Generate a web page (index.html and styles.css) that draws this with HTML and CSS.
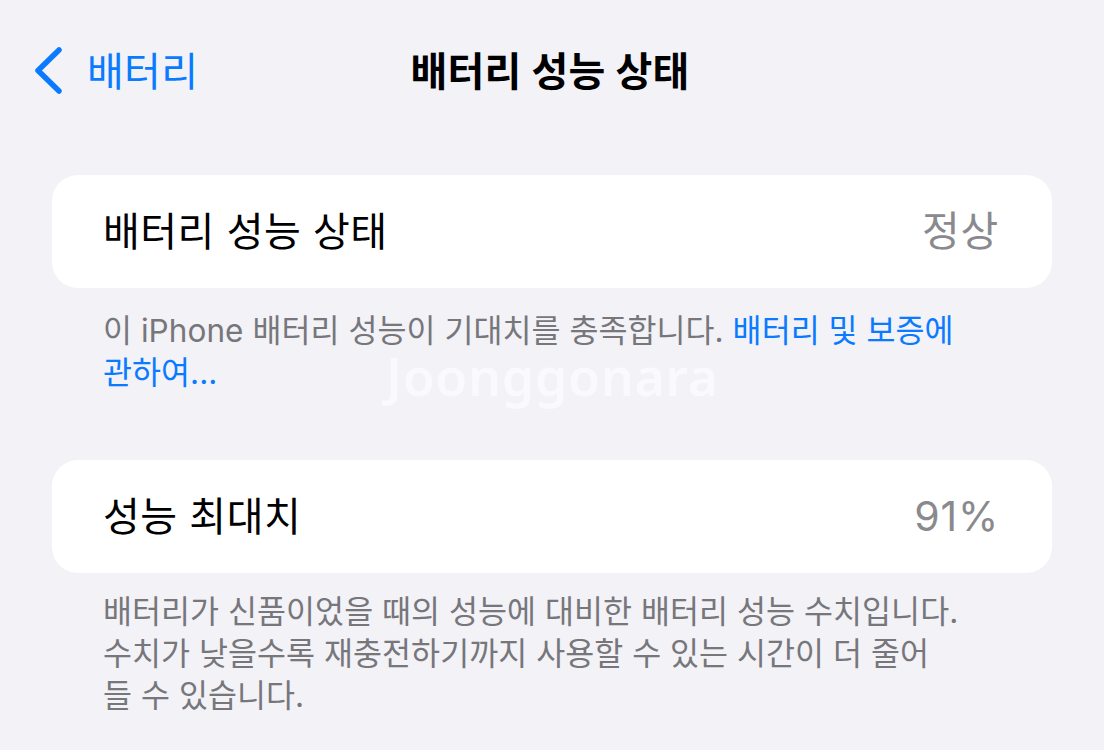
FILE: index.html
```html
<!DOCTYPE html>
<html lang="ko">
<head>
<meta charset="utf-8">
<link rel="stylesheet" href="styles.css">
</head>
<body>
<div class="page">
  <header class="nav">
    <div class="back">
      <svg class="chev" width="34" height="50" viewBox="0 0 34 50"><path d="M27 4 L6 24.5 L27 45" fill="none" stroke="#0a7aff" stroke-width="5.5" stroke-linecap="round" stroke-linejoin="round"/></svg>
      <span class="back-label">배터리</span>
    </div>
    <h1 class="title">배터리 성능 상태</h1>
  </header>

  <section class="group">
    <div class="card">
      <span class="label">배터리 성능 상태</span>
      <span class="value">정상</span>
    </div>
    <p class="footnote">이 iPhone 배터리 성능이 기대치를 충족합니다. <span class="link">배터리 및 보증에<br>관하여...</span></p>
  </section>

  <section class="group group-2">
    <div class="card">
      <span class="label">성능 최대치</span>
      <span class="value">91%</span>
    </div>
    <p class="footnote fn-2">배터리가 신품이었을 때의 성능에 대비한 배터리 성능 수치입니다.<br>수치가 낮을수록 재충전하기까지 사용할 수 있는 시간이 더 줄어<br>들 수 있습니다.</p>
  </section>

  <div class="watermark">Joonggonara</div>
</div>
</body>
</html>
```

FILE: styles.css
```css
* { box-sizing: border-box; }
html, body {
  margin: 0;
  padding: 0;
  background: #f2f2f7;
}
body {
  font-family: Inter, "Noto Sans CJK KR", sans-serif;
  color: #000;
  width: 1104px;
  height: 750px;
  overflow: hidden;
}
.page {
  position: relative;
  padding: 0 52px;
}
.nav {
  position: relative;
  height: 144px;
  display: flex;
  align-items: center;
  justify-content: center;
}
.back {
  position: absolute;
  left: -20px;
  top: 0;
  height: 144px;
  display: flex;
  align-items: center;
  gap: 21px;
}
.chev { display: block; margin-top: -2px; }
.back-label {
  color: #0a7aff;
  font-size: 40px;
  letter-spacing: 0.3px;
  line-height: 1;
}
.title {
  margin: 0 0 0 -4px;
  font-size: 40px;
  font-weight: 700;
  letter-spacing: 0.3px;
  line-height: 1;
}
.group { margin-top: 31px; }
.group-2 { margin-top: 66px; }
.card {
  background: #fff;
  border-radius: 26px;
  height: 113px;
  padding: 0 53px 0 51px;
  display: flex;
  align-items: center;
  justify-content: space-between;
}
.label {
  font-size: 40px;
  letter-spacing: 0.5px;
  line-height: 1;
}
.value {
  font-size: 41px;
  letter-spacing: 0.8px;
  color: #8a8a8e;
  line-height: 1;
}
.footnote {
  margin: 0;
  padding: 22px 0 0 51px;
  font-size: 31.5px;
  line-height: 42px;
  letter-spacing: 0.05px;
  color: #76767b;
  white-space: nowrap;
}
.fn-2 { padding-top: 18px; }
.link { color: #0a7aff; }
.watermark {
  position: absolute;
  left: 386px;
  top: 340px;
  font-family: "Noto Sans", sans-serif;
  font-weight: 600;
  font-size: 52px;
  letter-spacing: 0.6px;
  color: rgba(255,255,255,0.6);
  pointer-events: none;
}
```
